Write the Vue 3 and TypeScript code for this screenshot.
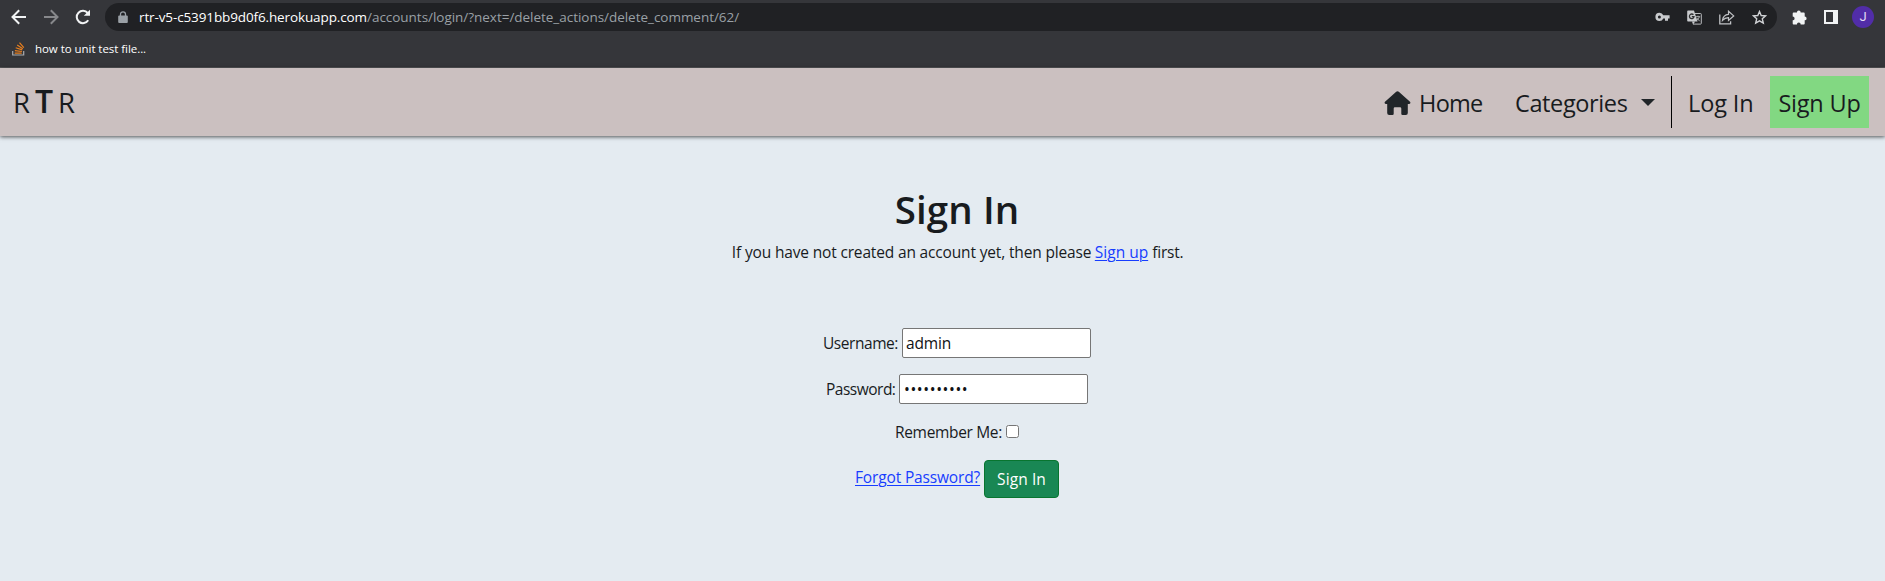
<script setup lang="ts">
import { ref } from 'vue'

const username = ref('admin')
const password = ref('0123456789')
const remember = ref(false)
</script>

<template>
  <div class="window">
    <div class="chrome">
      <div class="toolbar">
        <svg class="tool back" viewBox="0 0 16 16"><path d="M15 8H2M8.2 1.3 1.5 8l6.7 6.7" /></svg>
        <svg class="tool forward" viewBox="0 0 16 16"><path d="M1 8h13M7.8 1.3 14.5 8l-6.7 6.7" /></svg>
        <svg class="tool reload" viewBox="0 0 16 16">
          <path d="M13.2 11.3A6.2 6.2 0 1 1 12.7 4" /><path class="solid" d="M15 .8v6H8.8Z" />
        </svg>
        <div class="address">
          <svg class="lock" viewBox="0 0 10 13">
            <path class="solid" d="M1.2 4.4h7.6q1 0 1 1V11q0 1-1 1H1.2q-1 0-1-1V5.4q0-1 1-1Z" />
            <path d="M2.5 5V3.3a2.5 2.5 0 0 1 5 0V5" />
          </svg>
          <span class="host">rtr-v5-c5391bb9d0f6.herokuapp.com</span>
          <span class="path">/accounts/login/?next=/delete_actions/delete_comment/62/</span>
          <div class="address-icons">
            <svg width="15" height="10" viewBox="0 0 15 10">
              <path fill="#c8cacd" fill-rule="evenodd" d="M4.5.8A4.1 4.1 0 0 0 4.5 9 4.1 4.1 0 0 0 8.3 6.4H10v2.3h3V6.4h1.6V3.3H8.3A4.1 4.1 0 0 0 4.5.8ZM4.4 3.4a1.5 1.5 0 1 1 0 3 1.5 1.5 0 0 1 0-3Z" />
            </svg>
            <svg width="15" height="15" viewBox="0 0 15 15">
              <path d="M7.5 3.5h6q.8 0 .8.8v9q0 .8-.8.8H6" fill="none" stroke="#b9bbbe" />
              <path fill="#c8cacd" d="M1 .5h6l3.500 11H1q-.8 0-.8-.8V1.300Q.2.500 1 .500ZM8 11.800l-2 2.600-.9-2.600Z" />
              <path d="M6.400 4.700a2.300 2.300 0 1 0 .6 2H4.800" fill="none" stroke="#303134" stroke-width="1.300" />
              <path d="M8.700 6.700h4.500M11 5.700v1M12.300 6.900q-.5 2-2.600 3.600M9.800 8l2.900 3.200" fill="none" stroke="#b9bbbe" stroke-width=".9" />
            </svg>
            <svg width="16" height="15" viewBox="0 0 16 15">
              <path d="M.8 4.500v9.300h10.800v-2.500" fill="none" stroke="#c0c2c5" stroke-width="1.300" />
              <path d="M3.500 10.300q.7-5.500 6-6V1.200l5.200 4.700-5.200 4.600V7.600Q6 7.500 3.500 10.300Z" fill="none" stroke="#c0c2c5" stroke-width="1.200" />
            </svg>
            <svg width="15" height="15" viewBox="0 0 15 15">
              <path d="m7.500 1.500 1.700 4 4.400.4-3.300 2.900 1 4.300-3.800-2.300-3.800 2.300 1-4.300L1.400 5.900l4.400-.4Z" fill="none" stroke="#d0d2d5" stroke-width="1.400" />
            </svg>
          </div>
        </div>
        <svg class="puzzle" viewBox="0 0 15 15">
          <path fill="#f1f3f4" d="M1.600 2.500h3.300a1.900 1.900 0 0 1 3.800 0h3.100q.9 0 .9.900v3.100a1.900 1.900 0 0 1 0 3.800v3.200q0 .9-.9.900H8.700a1.900 1.900 0 0 0-3.800 0H1.600q-.9 0-.9-.9v-3.200a1.900 1.900 0 0 0 0-3.800V3.400q0-.9.9-.9Z" />
        </svg>
        <div class="side-panel"></div>
        <div class="avatar">J</div>
      </div>
      <div class="bookmarks">
        <svg width="13" height="15" viewBox="0 0 13 15" fill="none">
          <path d="M.7 10v4h11v-4" stroke="#a9abae" stroke-width="1.200" />
          <path d="M2.700 12.100h7M2.900 9.700l7 .8M3.700 6.800l6.500 2.100M5.200 4l5.600 3.700M7.500 1.600l4.300 5" stroke="#e87f1e" stroke-width="1.200" />
        </svg>
        <span>how to unit test file...</span>
      </div>
    </div>

    <nav class="navbar">
      <a class="brand"><span>R</span><b>T</b><span>R</span></a>
      <div class="links">
        <a class="home">
          <svg width="27" height="24" viewBox="0 0 27 24">
            <path fill="#212529" d="M13.500.2q.7 0 1.300.5L26 10.700q.7.700.3 1.500-.3.800-1.300.8h-1.200v9q0 2-2 2h-3.300q-1.200 0-1.200-1.300v-5.200q0-1.200-1.200-1.200h-5.200q-1.200 0-1.200 1.200v5.200Q9.700 24 8.500 24H5.200q-2 0-2-2v-9H2q-1 0-1.300-.8-.4-.8.3-1.500L12.200.7q.6-.5 1.300-.5Z" />
          </svg>
          <span>Home</span>
        </a>
        <a class="categories"><span>Categories</span><i class="caret"></i></a>
        <a class="login">Log In</a>
        <a class="signup">Sign Up</a>
      </div>
    </nav>

    <main>
      <h1>Sign In</h1>
      <p class="intro"><span class="lead">If you have not created an account yet, then please</span><a class="link">Sign up</a><span class="tail">first.</span></p>
      <form @submit.prevent>
        <div class="row field">
          <label class="user" for="username">Username:</label>
          <input id="username" v-model="username" type="text">
        </div>
        <div class="row field second">
          <label class="pass" for="password">Password:</label>
          <input id="password" v-model="password" type="password">
        </div>
        <div class="row remember">
          <label for="remember">Remember Me:</label>
          <input id="remember" v-model="remember" type="checkbox">
        </div>
        <div class="row actions">
          <a class="link">Forgot Password?</a>
          <button type="submit">Sign In</button>
        </div>
      </form>
    </main>
  </div>
</template>

<style>
body { background: #e4ebf1; overflow: hidden; }
</style>

<style scoped>
* { box-sizing: border-box; }
.window {
  height: 581px;
  background: #e4ebf1;
  color: #181b1e;
  font-family: "Open Sans", "Noto Sans", sans-serif;
  white-space: nowrap;
}
svg { display: block; flex: none; }
.chrome { height: 68px; background: #35363a; border-bottom: 1px solid #56575a; }
.toolbar { display: flex; align-items: center; height: 34px; padding-left: 11px; }
.tool { width: 16px; height: 16px; margin-right: 16px; fill: none; stroke: #f1f3f4; stroke-width: 2; }
.tool.forward { stroke: #87888b; }
.tool.reload { margin-right: 14px; }
.tool .solid { fill: #f1f3f4; stroke: none; }
.address {
  display: flex;
  align-items: center;
  width: 1672px;
  height: 28px;
  padding-left: 13px;
  border-radius: 14px;
  background: #202124;
  font-size: 13.5px;
}
.lock { width: 10px; height: 13px; margin-right: 11px; fill: none; stroke: #9aa0a6; stroke-width: 1.300; }
.lock .solid { fill: #9aa0a6; stroke: none; }
.host { width: 228px; color: #fff; letter-spacing: -0.12px; }
.path { color: #9aa0a6; letter-spacing: -0.03px; }
.address-icons { display: flex; align-items: center; gap: 17px; margin-left: auto; padding-right: 10px; }
.puzzle { width: 15px; height: 15px; margin-left: 15px; }
.side-panel { width: 14px; height: 14px; margin-left: 17px; border: 2px solid #f1f3f4; border-right-width: 5px; }
.avatar {
  width: 22px;
  height: 22px;
  margin-left: 14px;
  border-radius: 50%;
  background: #512da8;
  color: #e4dcf5;
  font: 13px/22px Roboto, sans-serif;
  text-align: center;
}
.bookmarks { display: flex; align-items: center; gap: 10px; height: 29px; padding-left: 12px; color: #fff; font-size: 11.5px; letter-spacing: -0.05px; }

.navbar {
  position: relative;
  display: flex;
  justify-content: space-between;
  height: 68px;
  padding: 8px 16px 8px 13px;
  background: #cbc0c0;
  box-shadow: 0 1px 4px rgba(0, 0, 0, 0.65);
}
.brand { display: flex; align-items: baseline; gap: 5px; font-size: 27.5px; line-height: 50px; }
.brand span { width: 17px; }
.brand b { font-size: 32px; font-weight: 600; }
.links { display: flex; height: 52px; font-size: 23.5px; line-height: 54px; }
.home { display: flex; align-items: center; gap: 7px; width: 131px; letter-spacing: -0.7px; }
.home span { margin-left: 1px; }
.home svg { margin-top: 1px; }
.home span, .categories span { margin-top: 2px; }
.categories { display: flex; align-items: center; width: 157px; border-right: 1px solid #000; letter-spacing: -0.38px; }
.caret { margin: 1px 0 0 14px; border: 7px solid transparent; border-top-color: #212529; border-bottom: 0; }
.login { width: 98px; padding-left: 16px; letter-spacing: -0.1px; }
.signup { width: 99px; background: #82d882; text-align: center; letter-spacing: -0.2px; }

main { display: flex; flex-direction: column; align-items: center; padding: 49px 0 0 29px; font-size: 15.5px; }
h1 { margin: 0; font-size: 38.5px; font-weight: 600; line-height: 48px; letter-spacing: 0.1px; }
.intro { display: flex; margin: 7px 0 0; line-height: 24px; }
.lead { width: 363px; letter-spacing: -0.16px; }
.link { color: #173dff; text-decoration: underline; text-decoration-thickness: 1px; text-underline-offset: 2px; }
.tail { width: 30px; margin-left: 4px; letter-spacing: -0.2px; }
form { margin-top: 64px; }
.row { display: flex; align-items: center; justify-content: center; line-height: 24px; }
.field { height: 30px; }
.second { margin-top: 16px; }
.user { width: 79px; letter-spacing: -0.45px; }
.pass { width: 73px; letter-spacing: -0.5px; }
.field input {
  width: 189px;
  height: 30px;
  padding: 1px 3px;
  border: 1px solid #767676;
  border-radius: 2px;
  background: #fff;
  color: #101214;
  font: inherit;
  letter-spacing: -0.15px;
}
.field input[type="password"] { padding-left: 4px; letter-spacing: 0.6px; }
.remember { height: 24px; margin-top: 16px; }
.remember label { width: 111px; letter-spacing: -0.33px; }
.remember input { width: 13px; height: 13px; margin: -2px 0 0; }
.actions { height: 38px; margin-top: 16px; }
.actions .link { width: 129px; margin-top: -4px; letter-spacing: -0.15px; }
button { width: 75px; height: 38px; padding: 0; border: 1px solid #08752f; border-radius: 4px; background: #198754; color: #fff; font: inherit; letter-spacing: 0.1px; }
</style>
